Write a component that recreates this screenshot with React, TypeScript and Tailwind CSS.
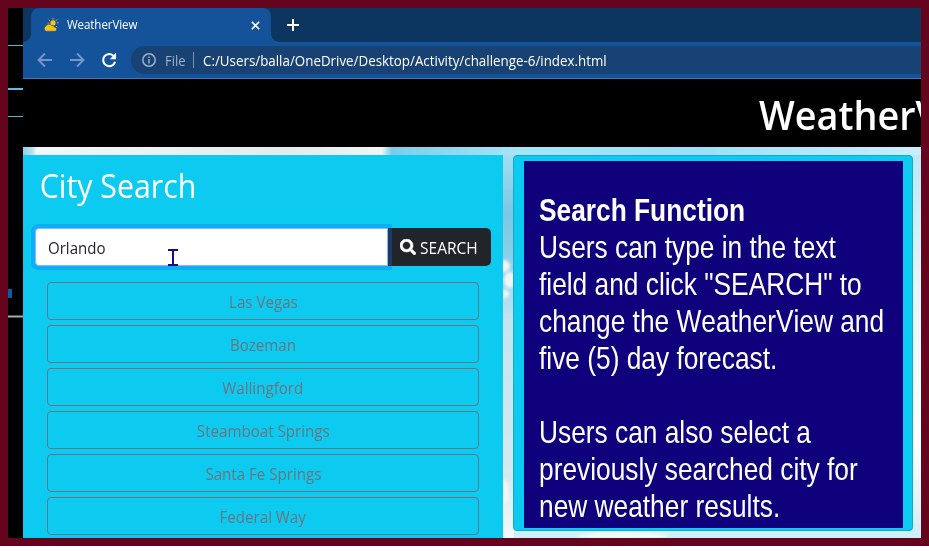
import React from 'react';

const cities = ['Las Vegas', 'Bozeman', 'Wallingford', 'Steamboat Springs', 'Santa Fe Springs', 'Federal Way'];

function WeatherIcon() {
  return (
    <svg className="h-4 w-4" viewBox="0 0 16 16">
      <g stroke="#b3a545" strokeWidth="1" strokeLinecap="round">
        <path d="M10 1v1.400M6 3l1 1M14 2.600l-1 1M14.200 5.800h1M13.200 9.200l.8.8M6 6.200H5" />
      </g>
      <circle cx="10" cy="5.900" r="2.600" fill="#f6c21c" />
      <path
        d="M3.300 14.200A2.600 2.600 0 0 1 2.600 9.400 3.600 3.600 0 0 1 8.600 8.600a2.600 2.600 0 0 1 2.800 1.600 2 2 0 0 1 .6 4z"
        fill="#ffc20e"
        stroke="#14529a"
        strokeWidth=".5"
      />
    </svg>
  );
}

function TabStrip() {
  return (
    <div className="flex h-[34px] bg-[#0c3560] pl-2">
      <div className="relative flex h-[34px] w-[240px] items-center rounded-t-lg bg-[#14529a] pr-[11px] pl-3">
        <div className="absolute bottom-0 -left-2 h-2 w-2 bg-[radial-gradient(circle_at_0_0,#0c3560_7.5px,#14529a_8px)]" />
        <div className="absolute -right-2 bottom-0 h-2 w-2 bg-[radial-gradient(circle_at_100%_0,#0c3560_7.5px,#14529a_8px)]" />
        <WeatherIcon />
        <span className="ml-2 flex-1 origin-left scale-x-[.965] text-[12px] tracking-[-0.1px] text-white">WeatherView</span>
        <svg className="h-[9px] w-[9px]" viewBox="0 0 9 9" stroke="#fff" strokeWidth="1.6">
          <path d="M.8.8l7.400 7.400M8.200.8L.8 8.200" />
        </svg>
      </div>
      <svg className="mt-[11px] ml-4 h-3 w-3" viewBox="0 0 12 12" stroke="#fff" strokeWidth="2">
        <path d="M6 0v12M0 6h12" />
      </svg>
    </div>
  );
}

function Toolbar() {
  return (
    <div className="flex h-[37px] items-center border-b border-[#4678b8] bg-[#14529a] pl-[14px]">
      <svg className="h-4 w-4" viewBox="0 0 16 16" fill="none" stroke="#7198c8" strokeWidth="1.9">
        <path d="M15 8H2M8 1.500L1.500 8 8 14.500" />
      </svg>
      <svg className="ml-4 h-4 w-4" viewBox="0 0 16 16" fill="none" stroke="#7198c8" strokeWidth="1.9">
        <path d="M1 8h13M8 1.500L14.500 8 8 14.500" />
      </svg>
      <svg className="ml-4 h-4 w-4" viewBox="0 0 16 16" fill="none" stroke="#fff" strokeWidth="2.1">
        <path d="M13 4.200A6.100 6.100 0 1 0 14.100 9.800" />
        <path d="M15 .8v6.400H8.800z" fill="#fff" stroke="none" />
      </svg>
      <div className="ml-[14px] flex h-7 flex-1 items-center rounded-l-full bg-[#184273] pl-[11px] text-[14px] whitespace-nowrap">
        <svg className="h-[14px] w-[14px]" viewBox="0 0 14 14" fill="none" stroke="#9eafc5" strokeWidth="1.5">
          <circle cx="7" cy="7" r="6.200" />
          <path d="M7 6v4.500M7 3.400v1.500" />
        </svg>
        <span className="ml-[9px] w-[21px] origin-left scale-x-[.93] text-[#9eafc5]">File</span>
        <span className="ml-[7px] h-4 w-px bg-[#7e95b1]" />
        <span className="ml-[9px] w-[404px] origin-left scale-x-[.954] text-white">
          C:/Users/balla/OneDrive/Desktop/Activity/challenge-6/index.html
        </span>
      </div>
    </div>
  );
}

function SearchPanel() {
  return (
    <section className="relative w-[480px] shrink-0 bg-[#0dcaf0] px-3">
      <h2 className="origin-left scale-x-[.947] pt-[10px] pl-[5px] text-[32px] leading-[42px] text-white">City Search</h2>
      <div className="mt-[21px] flex h-[38px]">
        <div className="relative z-10 flex w-[353px] items-center rounded-l border border-[#86b7fe] bg-white pl-3 text-[16px] text-[#212529] ring-4 ring-[#0d6efd]/30">
          <span className="origin-left scale-x-[.94] pt-px">Orlando</span>
        </div>
        <button className="flex w-[103px] items-center rounded-r-[5px] bg-[#212529] pl-3 text-[16px] text-white">
          <svg className="h-4 w-4 shrink-0" viewBox="0 0 512 512" fill="#fff" stroke="#fff" strokeWidth="18">
            <path d="M505 442.700L405.300 343c-4.500-4.500-10.600-7-17-7H372c27.600-35.300 44-79.700 44-128C416 93.100 322.900 0 208 0S0 93.100 0 208s93.100 208 208 208c48.300 0 92.700-16.400 128-44v16.300c0 6.400 2.500 12.500 7 17l99.700 99.700c9.400 9.400 24.600 9.400 33.900 0l28.300-28.300c9.400-9.400 9.400-24.600.1-34zM208 336c-70.700 0-128-57.200-128-128 0-70.700 57.200-128 128-128 70.700 0 128 57.200 128 128 0 70.700-57.200 128-128 128z" />
          </svg>
          <span className="ml-1 origin-left scale-x-[.97] pt-px">SEARCH</span>
        </button>
      </div>
      <ul className="mt-4 flex flex-col gap-[5px] px-3">
        {cities.map((city) => (
          <li key={city} className="flex h-[38px] shrink-0 items-center justify-center rounded border border-[#6c757d] text-[16px] text-[#6c757d]">
            <span className="scale-x-[.945] pt-px">{city}</span>
          </li>
        ))}
      </ul>
      <svg className="absolute top-[94px] left-[145px] z-20 h-[17px] w-[10px]" viewBox="0 0 10 17" fill="#1c0c8c">
        <path d="M0 0h10v2H6v13h4v2H0v-2h4V2H0z" />
      </svg>
    </section>
  );
}

function Explanation() {
  return (
    <section className="flex h-[376px] w-[400px] shrink-0 rounded border border-[#0fabc9] bg-[#0dcaf0] pt-[5px] pl-[10px]">
      <div className="h-[367px] w-[379px] bg-[#0f007c] pt-[31px] pl-[15px]">
        <div className="origin-left scale-x-[.822] font-['Liberation_Sans',Arial,sans-serif] text-[32px] leading-[37px] whitespace-nowrap text-white [font-kerning:none]">
          <h3 className="font-bold">Search Function</h3>
          <p>Users can type in the text</p>
          <p>field and click "SEARCH" to</p>
          <p>change the WeatherView and</p>
          <p>five (5) day forecast.</p>
          <p className="mt-[37px]">Users can also select a</p>
          <p>previously searched city for</p>
          <p>new weather results.</p>
        </div>
      </div>
    </section>
  );
}

function Sky() {
  return (
    <svg className="absolute inset-0 h-[391px] w-[898px]" viewBox="0 0 898 391" preserveAspectRatio="none">
      <defs>
        <linearGradient id="top" x1="0" x2="1">
          <stop offset="0" stopColor="#8fd0e8" />
          <stop offset=".01" stopColor="#b5dfee" />
          <stop offset=".015" stopColor="#f2f7f9" />
          <stop offset=".3" stopColor="#e3ebef" />
          <stop offset=".4" stopColor="#f1f5f5" />
          <stop offset=".41" stopColor="#7ccdea" />
          <stop offset=".55" stopColor="#a5e5f8" />
          <stop offset=".75" stopColor="#9be0f7" />
          <stop offset="1" stopColor="#c9eefb" />
        </linearGradient>
        <linearGradient id="middle" x1="0" x2="0" y1="0" y2="1">
          <stop offset="0" stopColor="#a2def0" />
          <stop offset=".15" stopColor="#79c8e5" />
          <stop offset=".26" stopColor="#8bcfe9" />
          <stop offset=".43" stopColor="#c3e4f0" />
          <stop offset=".85" stopColor="#d5eaf0" />
          <stop offset="1" stopColor="#f4faf9" />
        </linearGradient>
        <linearGradient id="edge" x1="0" x2="0" y1="0" y2="1">
          <stop offset="0" stopColor="#bce9f8" />
          <stop offset=".35" stopColor="#e4f7fb" />
          <stop offset=".75" stopColor="#fff" />
          <stop offset="1" stopColor="#cceef8" />
        </linearGradient>
        <filter id="soft">
          <feGaussianBlur stdDeviation="1.5" />
        </filter>
      </defs>
      <path d="M0 0h898v9H0z" fill="url(#top)" />
      <path d="M480 8h11v383h-11z" fill="url(#middle)" />
      <g fill="#f1f6f5" filter="url(#soft)">
        <ellipse cx="481" cy="119" rx="6" ry="6" />
        <ellipse cx="487" cy="133" rx="6" ry="8" />
        <ellipse cx="482" cy="147" rx="4" ry="4" />
        <ellipse cx="481" cy="345" rx="5" ry="12" />
      </g>
      <path d="M890 8h8v383h-8z" fill="url(#edge)" />
      <path d="M491 384h407v7H491z" fill="#d2eef6" />
      <ellipse cx="600" cy="389" rx="45" ry="4" fill="#f4faf9" filter="url(#soft)" />
    </svg>
  );
}

export default function App() {
  return (
    <div className="h-[551px] w-[929px] bg-white font-['Open_Sans',sans-serif]">
      <div className="flex h-[546px] w-[929px] overflow-hidden border-8 border-[#65041d] bg-black">
        <aside className="w-[15px] shrink-0">
          <div className="mt-[37px] h-px bg-[#55b3cc]" />
          <div className="mt-[42px] h-[2px] bg-[#62bcd5]" />
          <div className="mt-[26px] h-px bg-[#55b3cc]" />
          <div className="mt-[172px] h-[9px] w-1 bg-[#075d9d]" />
          <div className="mt-[17px] h-[3px] border-y border-[#555] bg-[#aaa]" />
        </aside>
        <main className="flex w-[898px] shrink-0 flex-col overflow-hidden">
          <TabStrip />
          <Toolbar />
          <header className="h-[68px] shrink-0 overflow-hidden bg-black pl-[736px]">
            <h1 className="w-[240px] origin-left scale-x-[.945] pt-[9px] text-[40px] leading-[54px] font-semibold text-white">WeatherView</h1>
          </header>
          <div className="relative flex min-h-0 flex-1 gap-[10px] overflow-hidden bg-[#b9e8f7] pt-2">
            <Sky />
            <div className="relative flex items-stretch">
              <SearchPanel />
            </div>
            <div className="relative">
              <Explanation />
            </div>
          </div>
        </main>
      </div>
    </div>
  );
}
